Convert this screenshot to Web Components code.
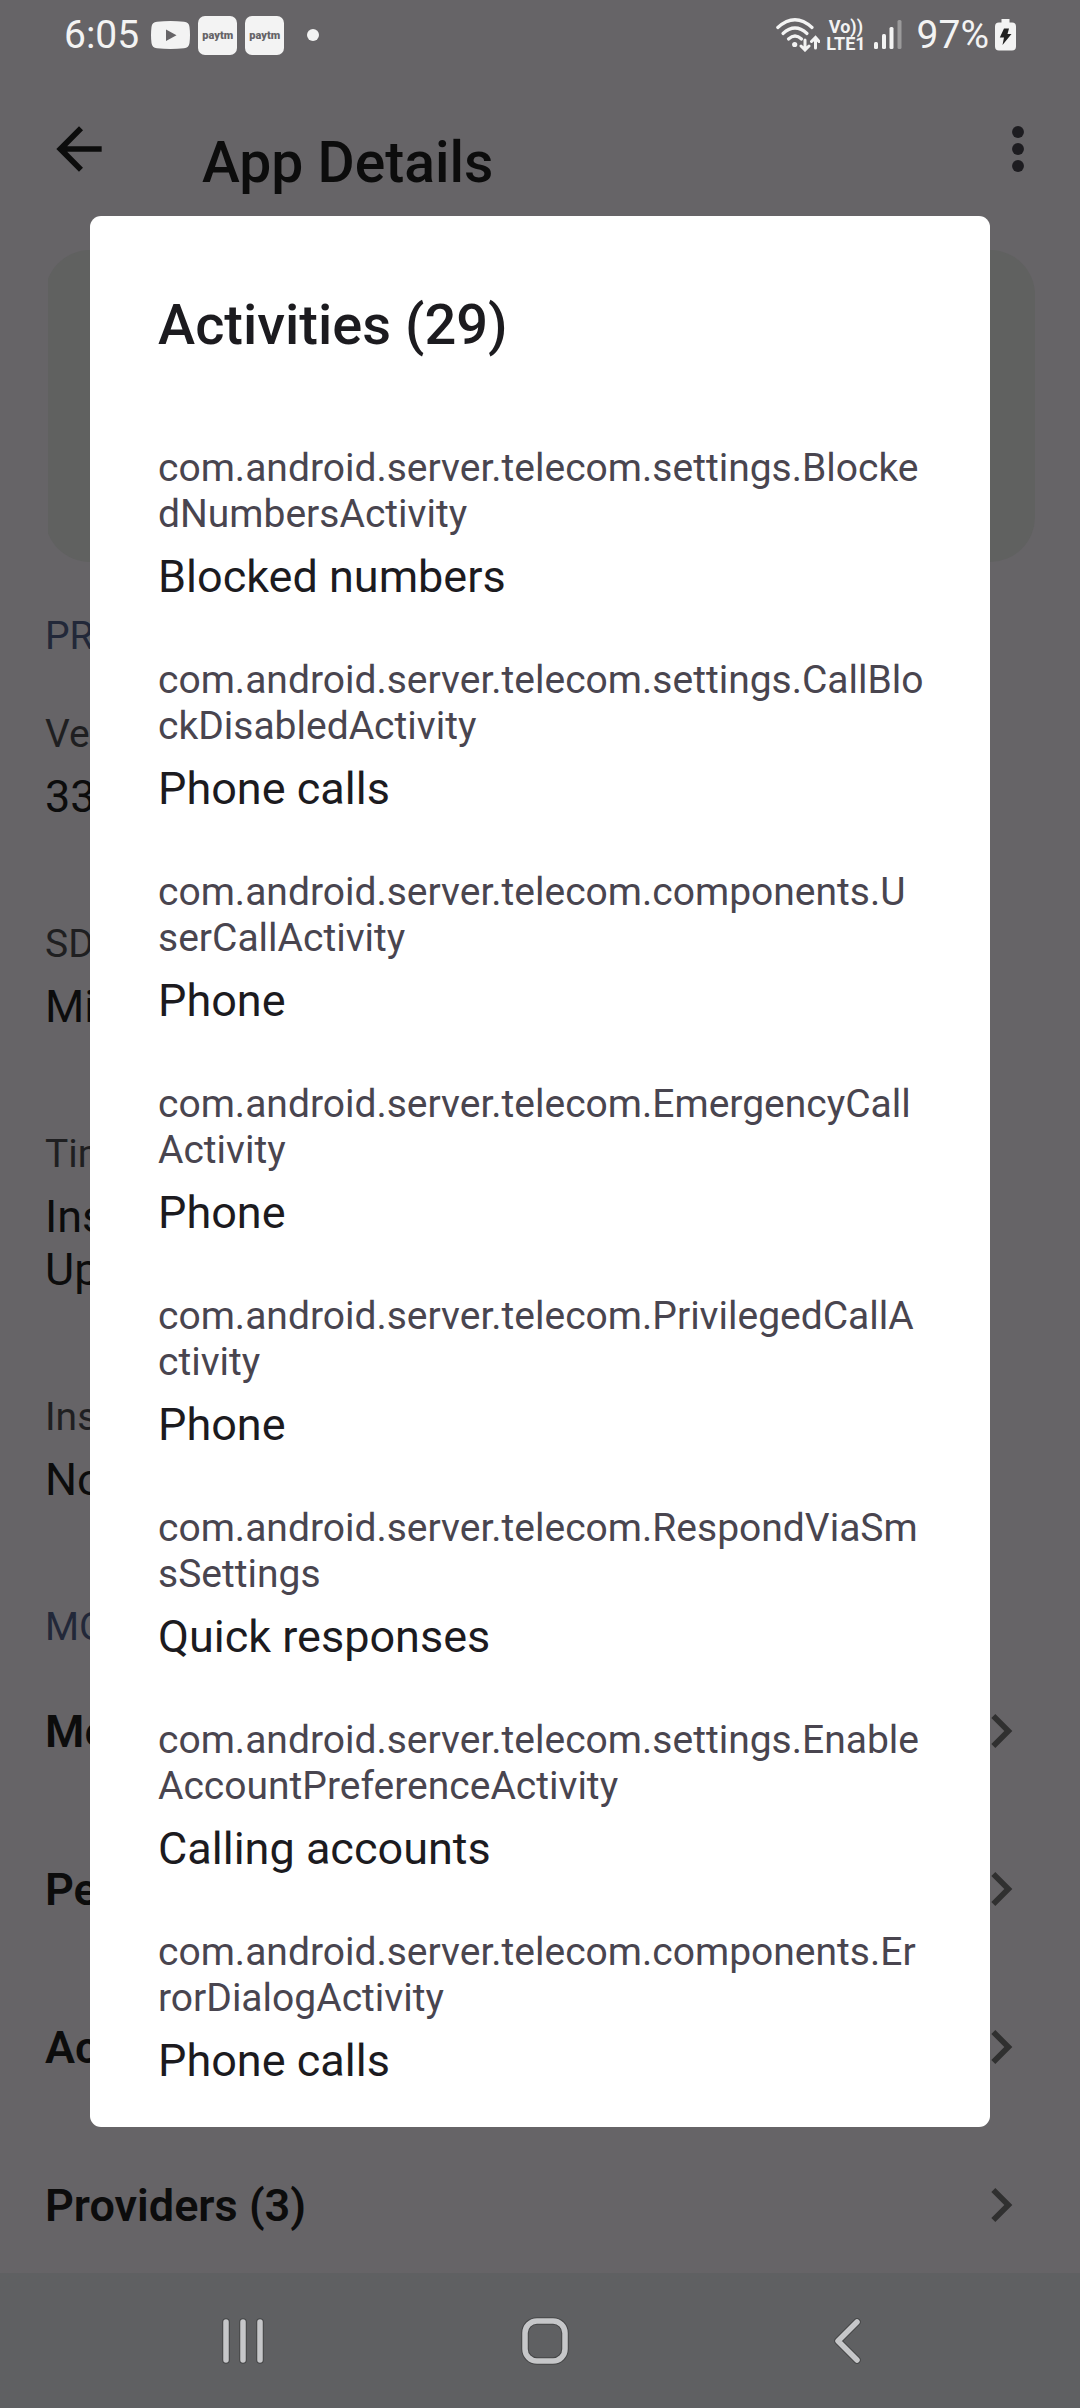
<!DOCTYPE html>
<html lang="en">
<head>
<meta charset="utf-8">
<meta name="viewport" content="width=device-width, initial-scale=1">
<title>App Details</title>
<style>
  html, body { margin: 0; }
  body { font-family: Roboto, "Liberation Sans", sans-serif; background: #666467; }
</style>
</head>
<body>
<app-screen>
  <status-bar slot="status"></status-bar>
  <top-bar slot="top">App Details</top-bar>
  <app-card></app-card>
  <info-section heading="PR">
    <info-field label="Ve">33</info-field>
    <info-field label="SD">Mi</info-field>
    <info-field label="Tim">Ins<br>Up</info-field>
    <info-field label="Ins">No</info-field>
  </info-section>
  <link-section heading="MO">
    <link-row>Me</link-row>
    <link-row>Pe</link-row>
    <link-row>Ac</link-row>
    <link-row>Providers (3)</link-row>
  </link-section>
  <nav-bar slot="nav"></nav-bar>
  <activity-dialog slot="dialog" heading="Activities (29)">
    <activity-item name="com.android.server.telecom.settings.BlockedNumbersActivity">Blocked numbers</activity-item>
    <activity-item name="com.android.server.telecom.settings.CallBlockDisabledActivity">Phone calls</activity-item>
    <activity-item name="com.android.server.telecom.components.UserCallActivity">Phone</activity-item>
    <activity-item name="com.android.server.telecom.EmergencyCallActivity">Phone</activity-item>
    <activity-item name="com.android.server.telecom.PrivilegedCallActivity">Phone</activity-item>
    <activity-item name="com.android.server.telecom.RespondViaSmsSettings">Quick responses</activity-item>
    <activity-item name="com.android.server.telecom.settings.EnableAccountPreferenceActivity">Calling accounts</activity-item>
    <activity-item name="com.android.server.telecom.components.ErrorDialogActivity">Phone calls</activity-item>
  </activity-dialog>
</app-screen>

<script>
const define = (name, markup) => {
  customElements.define(name, class extends HTMLElement {
    connectedCallback() {
      if (this.shadowRoot) return;
      const root = this.attachShadow({ mode: 'open' });
      root.innerHTML = markup;
      for (const el of root.querySelectorAll('[data-attr]')) {
        el.textContent = this.getAttribute(el.dataset.attr);
      }
    }
  });
};

define('app-screen', `
  <style>
    :host { display: flex; flex-direction: column; min-height: 100vh; position: relative; }
    main { flex: 1; padding: 0 45px; }
    .overlay { position: absolute; inset: 0; padding: 216px 90px 0; }
  </style>
  <slot name="status"></slot>
  <slot name="top"></slot>
  <main><slot></slot></main>
  <slot name="nav"></slot>
  <div class="overlay"><slot name="dialog"></slot></div>`);

define('status-bar', `
  <style>
    :host { display: flex; justify-content: space-between; align-items: center; height: 70px;
            padding: 0 64px; color: #f3f3f3; font-size: 39px; line-height: 46px; }
    div { display: flex; align-items: center; }
    svg { display: block; fill: currentColor; }
    .left { gap: 8px; }
    .time { margin-right: 4px; }
    .app { width: 39px; height: 39px; border-radius: 7px; background: #f3f3f3; color: #666467;
           font-size: 11px; line-height: 39px; font-weight: 900; text-align: center; }
    .dot { width: 12px; height: 12px; border-radius: 50%; background: #f3f3f3; margin-left: 15px; }
    .right { gap: 6px; }
    .lte { flex-direction: column; font-size: 18px; line-height: 17px; font-weight: 700; margin-right: 2px; }
    .pct { margin-left: 9px; }
  </style>
  <div class="left">
    <span class="time">6:05</span>
    <svg width="39" height="28" viewBox="0 0 39 28"><path fill-rule="evenodd" d="M6 .8Q19.500-.8 33 .8 38 1.300 38.500 6 39.500 14 38.500 22 38 26.700 33 27.200 19.500 28.800 6 27.200 1 26.700.5 22-.5 14 .5 6 1 1.300 6 .8ZM15 8.500V20L25.500 14.200Z"/></svg>
    <span class="app">paytm</span>
    <span class="app">paytm</span>
    <span class="dot"></span>
  </div>
  <div class="right">
    <svg width="44" height="34" viewBox="0 0 44 34">
      <g fill="none" stroke="currentColor" stroke-width="3.200" stroke-linecap="round">
        <path d="M1.800 9.500Q19 -6 36 9.500"/><path d="M7 15.500Q19 4.500 31 15.500"/><path d="M12.500 21Q19 15 25.500 21"/>
        <path stroke-width="3" d="M29 22V31M25 28L29 32 33 28M39.500 30V20M35.500 23.500L39.500 19.500 43 23.500"/>
      </g>
      <circle cx="18.700" cy="26.500" r="2.600"/>
    </svg>
    <div class="lte"><span>Vo))</span><span>LTE1</span></div>
    <svg width="28" height="30" viewBox="0 0 28 30">
      <rect x="0" y="22" width="4" height="7" rx="1.500"/><rect x="8" y="14" width="4" height="15" rx="1.500"/>
      <rect x="15.500" y="7" width="4" height="22" rx="1.500"/><rect x="23.500" y="0" width="4" height="29" rx="1.500" opacity=".38"/>
    </svg>
    <span class="pct">97%</span>
    <svg width="21" height="32" viewBox="0 0 21 32"><path d="M6.500 0H14.500V3.500H17Q21 3.500 21 7.500V27.500Q21 31.500 17 31.500H4Q0 31.500 0 27.500V7.500Q0 3.500 4 3.500H6.500Z"/><path fill="#222" d="M9 9.500H14L12.500 15H16.500L7.500 26 9 18.500H4.800Z"/></svg>
  </div>`);

define('top-bar', `
  <style>
    :host { display: flex; align-items: flex-start; padding: 45px 28px 0 45px; height: 135px; }
    button { border: 0; padding: 0; background: none; display: block; }
    svg { display: block; }
    h1 { flex: 1; margin: 0; padding: 15px 0 0 89px; font-size: 57px; line-height: 66px; font-weight: 500; color: #0c0c0c; }
  </style>
  <button aria-label="Back"><svg width="68" height="68" viewBox="0 0 24 24" fill="#0c0c0c"><path d="M20 11H7.830l5.590-5.590L12 4l-8 8 8 8 1.410-1.410L7.830 13H20z"/></svg></button>
  <h1><slot></slot></h1>
  <button aria-label="More"><svg width="68" height="68" viewBox="0 0 24 24" fill="#1d1c20"><circle cx="12" cy="6" r="2.100"/><circle cx="12" cy="12" r="2.100"/><circle cx="12" cy="18" r="2.100"/></svg></button>`);

define('app-card', `
  <style>
    :host { display: block; height: 312px; border-radius: 45px; background: #606160; clip-path: inset(0 0 0 3px); }
  </style>`);

define('info-section', `
  <style>
    :host { display: block; padding-top: 51px; }
    h2 { margin: 0 0 52px; font-size: 39px; line-height: 46px; font-weight: 400; color: #222839; }
    div { display: flex; flex-direction: column; gap: 98px; }
  </style>
  <h2 data-attr="heading"></h2>
  <div><slot></slot></div>`);

define('info-field', `
  <style>
    :host { display: flex; flex-direction: column; gap: 13px; }
    .label { font-size: 39px; line-height: 46px; color: #1f1f21; }
    .value { font-size: 45px; line-height: 53px; color: #0c0c0c; }
  </style>
  <span class="label" data-attr="label"></span>
  <span class="value"><slot></slot></span>`);

define('link-section', `
  <style>
    :host { display: block; padding-top: 98px; }
    h2 { margin: 0 0 47px; font-size: 39px; line-height: 46px; font-weight: 400; color: #222839; }
    div { display: flex; flex-direction: column; gap: 90px; }
  </style>
  <h2 data-attr="heading"></h2>
  <div><slot></slot></div>`);

define('link-row', `
  <style>
    :host { display: block; }
    button { display: flex; align-items: center; justify-content: space-between; width: 100%; height: 68px;
             border: 0; padding: 0; background: none; font: 600 45px/53px Roboto, sans-serif; color: #0c0c0c; text-align: left; }
    svg { display: block; }
  </style>
  <button><span><slot></slot></span><svg width="68" height="68" viewBox="0 0 24 24" fill="#303030"><path d="M10 6L8.590 7.410 13.170 12l-4.580 4.590L10 18l6-6z"/></svg></button>`);

define('nav-bar', `
  <style>
    :host { display: flex; height: 135px; padding: 0 82px 0 92px; background: #5f6062; }
    button { flex: 1; border: 0; padding: 0; background: none; display: flex; justify-content: center; align-items: center; }
    svg { display: block; fill: none; stroke-linecap: round; stroke-linejoin: round; }
    .edge { stroke: #454647; stroke-width: 7.500; }
    .line { stroke: #c6c7c9; stroke-width: 5.500; }
  </style>
  <button aria-label="Recents"><svg width="52" height="52" viewBox="0 0 52 52"><path class="edge" d="M9 7V45M26 7V45M43 7V45"/><path class="line" d="M9 7V45M26 7V45M43 7V45"/></svg></button>
  <button aria-label="Home"><svg width="52" height="52" viewBox="0 0 52 52"><rect class="edge" x="6" y="6" width="40" height="40" rx="12"/><rect class="line" x="6" y="6" width="40" height="40" rx="12"/></svg></button>
  <button aria-label="Back"><svg width="52" height="52" viewBox="0 0 52 52"><path class="edge" d="M36 7L17 26 36 45"/><path class="line" d="M36 7L17 26 36 45"/></svg></button>`);

define('activity-dialog', `
  <style>
    :host { display: block; }
    section { background: #fff; border-radius: 11px; padding: 76px 66px 40px 68px; }
    h2 { margin: 0 0 87px; font-size: 56px; line-height: 66px; font-weight: 500; color: #1c1b1f; }
    .list { display: flex; flex-direction: column; gap: 54px; }
  </style>
  <section role="dialog" aria-labelledby="t">
    <h2 id="t" data-attr="heading"></h2>
    <div class="list"><slot></slot></div>
  </section>`);

define('activity-item', `
  <style>
    :host { display: flex; flex-direction: column; gap: 13px; }
    .name { font-size: 39px; line-height: 46px; color: #49454f; word-break: break-all; }
    .title { font-size: 45px; line-height: 53px; color: #1c1b1f; }
  </style>
  <span class="name" data-attr="name"></span>
  <span class="title"><slot></slot></span>`);
</script>
</body>
</html>
